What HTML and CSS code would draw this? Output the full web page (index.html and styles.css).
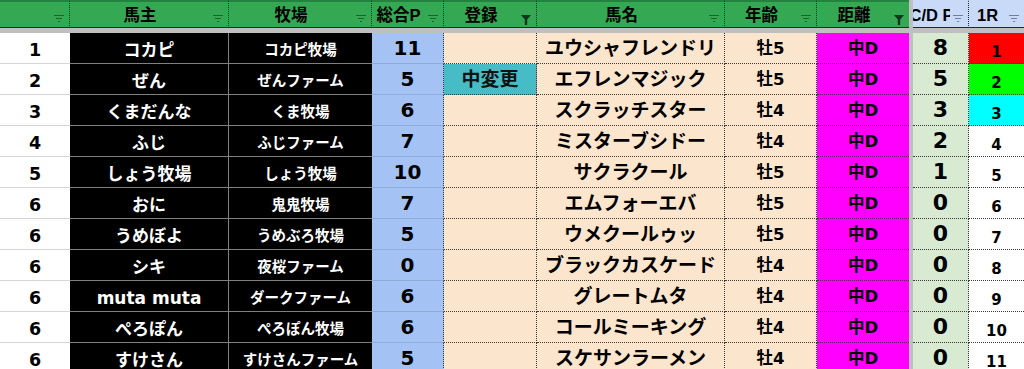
FILE: index.html
```html
<!DOCTYPE html>
<html lang="ja">
<head>
<meta charset="utf-8">
<title>Sheet</title>
<link rel="stylesheet" href="styles.css">
</head>
<body>
<div class="sheet">
  <div class="row head">
    <div class="h"><span class="lbl"></span><svg class="flt" width="10" height="8" viewBox="0 0 10 8"><path d="M0 .5h10M2 3.5h6M4 6.5h2" stroke="currentColor"/></svg></div>
    <div class="h"><span class="lbl">馬主</span><svg class="flt" width="10" height="8" viewBox="0 0 10 8"><path d="M0 .5h10M2 3.5h6M4 6.5h2" stroke="currentColor"/></svg></div>
    <div class="h"><span class="lbl">牧場</span><svg class="flt" width="10" height="8" viewBox="0 0 10 8"><path d="M0 .5h10M2 3.5h6M4 6.5h2" stroke="currentColor"/></svg></div>
    <div class="h"><span class="lbl">総合P</span><svg class="flt" width="10" height="8" viewBox="0 0 10 8"><path d="M0 .5h10M2 3.5h6M4 6.5h2" stroke="currentColor"/></svg></div>
    <div class="h"><span class="lbl">登録</span><svg class="flt on" width="10" height="10" viewBox="0 0 10 10"><path d="M0 0h10L6.2 4.6V10H3.8V4.6Z" fill="currentColor"/></svg></div>
    <div class="h"><span class="lbl">馬名</span><svg class="flt" width="10" height="8" viewBox="0 0 10 8"><path d="M0 .5h10M2 3.5h6M4 6.5h2" stroke="currentColor"/></svg></div>
    <div class="h"><span class="lbl">年齢</span><svg class="flt" width="10" height="8" viewBox="0 0 10 8"><path d="M0 .5h10M2 3.5h6M4 6.5h2" stroke="currentColor"/></svg></div>
    <div class="h last"><span class="lbl">距離</span><svg class="flt on" width="10" height="10" viewBox="0 0 10 10"><path d="M0 0h10L6.2 4.6V10H3.8V4.6Z" fill="currentColor"/></svg></div>
    <div class="fz"></div>
    <div class="h blue"><span class="lbl">C/D P</span><svg class="flt" width="10" height="8" viewBox="0 0 10 8"><path d="M0 .5h10M2 3.5h6M4 6.5h2" stroke="currentColor"/></svg></div>
    <div class="h blue last"><span class="lbl">1R</span><svg class="flt" width="10" height="8" viewBox="0 0 10 8"><path d="M0 .5h10M2 3.5h6M4 6.5h2" stroke="currentColor"/></svg></div>
  </div>
  <div class="band"></div>

  <div class="row"><div class="c a">1</div><div class="c b">コカピ</div><div class="c cc">コカピ牧場</div><div class="c d">11</div><div class="c e"></div><div class="c f">ユウシャフレンドリ</div><div class="c g">牡5</div><div class="c m">中D</div><div class="fz"></div><div class="c i">8</div><div class="c j red">1</div></div>
  <div class="row"><div class="c a">2</div><div class="c b">ぜん</div><div class="c cc">ぜんファーム</div><div class="c d">5</div><div class="c e chg">中変更</div><div class="c f">エフレンマジック</div><div class="c g">牡5</div><div class="c m">中D</div><div class="fz"></div><div class="c i">5</div><div class="c j lime">2</div></div>
  <div class="row"><div class="c a">3</div><div class="c b">くまだんな</div><div class="c cc">くま牧場</div><div class="c d">6</div><div class="c e"></div><div class="c f">スクラッチスター</div><div class="c g">牡4</div><div class="c m">中D</div><div class="fz"></div><div class="c i">3</div><div class="c j cyan">3</div></div>
  <div class="row"><div class="c a">4</div><div class="c b">ふじ</div><div class="c cc">ふじファーム</div><div class="c d">7</div><div class="c e"></div><div class="c f">ミスターブシドー</div><div class="c g">牡4</div><div class="c m">中D</div><div class="fz"></div><div class="c i">2</div><div class="c j">4</div></div>
  <div class="row"><div class="c a">5</div><div class="c b">しょう牧場</div><div class="c cc">しょう牧場</div><div class="c d">10</div><div class="c e"></div><div class="c f">サクラクール</div><div class="c g">牡5</div><div class="c m">中D</div><div class="fz"></div><div class="c i">1</div><div class="c j">5</div></div>
  <div class="row"><div class="c a">6</div><div class="c b">おに</div><div class="c cc">鬼鬼牧場</div><div class="c d">7</div><div class="c e"></div><div class="c f">エムフォーエバ</div><div class="c g">牡5</div><div class="c m">中D</div><div class="fz"></div><div class="c i">0</div><div class="c j">6</div></div>
  <div class="row"><div class="c a">6</div><div class="c b">うめぼよ</div><div class="c cc">うめぶろ牧場</div><div class="c d">5</div><div class="c e"></div><div class="c f boxed">ウメクールゥッ</div><div class="c g">牡5</div><div class="c m">中D</div><div class="fz"></div><div class="c i">0</div><div class="c j">7</div></div>
  <div class="row"><div class="c a">6</div><div class="c b">シキ</div><div class="c cc">夜桜ファーム</div><div class="c d">0</div><div class="c e"></div><div class="c f">ブラックカスケード</div><div class="c g">牡4</div><div class="c m">中D</div><div class="fz"></div><div class="c i">0</div><div class="c j">8</div></div>
  <div class="row"><div class="c a">6</div><div class="c b">muta muta</div><div class="c cc">ダークファーム</div><div class="c d">6</div><div class="c e"></div><div class="c f">グレートムタ</div><div class="c g">牡4</div><div class="c m">中D</div><div class="fz"></div><div class="c i">0</div><div class="c j">9</div></div>
  <div class="row"><div class="c a">6</div><div class="c b">ぺろぽん</div><div class="c cc">ぺろぽん牧場</div><div class="c d">6</div><div class="c e"></div><div class="c f boxed">コールミーキング</div><div class="c g">牡4</div><div class="c m">中D</div><div class="fz"></div><div class="c i">0</div><div class="c j">10</div></div>
  <div class="row"><div class="c a">6</div><div class="c b">すけさん</div><div class="c cc">すけさんファーム</div><div class="c d">5</div><div class="c e"></div><div class="c f">スケサンラーメン</div><div class="c g">牡4</div><div class="c m">中D</div><div class="fz"></div><div class="c i">0</div><div class="c j">11</div></div>
</div>
</body>
</html>
```

FILE: styles.css
```css
* { box-sizing: border-box; margin: 0; padding: 0; }
html, body { width: 1024px; height: 369px; overflow: hidden; background: #fff; }
body { font-family: "DejaVu Sans", "Noto Sans CJK JP", sans-serif; color: #000; }

.sheet { display: flex; flex-direction: column; }
.row {
  display: grid;
  grid-template-columns: 70px 159px 143px 72px 93px 188px 92px 92px 4px 56px 55px;
  height: 31px;
  flex: none;
}
.head { height: 28px; }
.band { height: 5px; background: #bfbfbf; flex: none; }
.fz { background: #bfbfbf; }

/* header */
.h {
  display: flex;
  align-items: center;
  background: #35a853;
  border-top: 2px solid #23823d;
  border-bottom: 1px solid #1f2a22;
  border-right: 1px dotted #17301d;
  overflow: hidden;
  font-family: "Liberation Sans", "Noto Sans CJK JP", sans-serif;
  font-weight: 700;
  font-size: 16.5px;
  line-height: 1;
}
.h.last { border-right: none; }
.h.blue { background: #c9daf8; border-top-color: #c9daf8; }
.h .lbl {
  flex: 1;
  min-width: 0;
  display: flex;
  justify-content: center;
  white-space: nowrap;
  overflow: hidden;
  padding-top: 1px;
}
.flt {
  flex: none;
  align-self: flex-start;
  margin: 13px 5px 0 3px;
  color: rgba(0, 0, 0, 0.42);
}
.flt.on { color: #12361b; }

/* body cells */
.c {
  display: flex;
  align-items: center;
  justify-content: center;
  white-space: nowrap;
  overflow: hidden;
  font-weight: 700;
  line-height: 1;
}
.a { background: #fff; font-size: 17.5px; border-bottom: 1px solid #d6d6d6; padding-top: 6px; }
.b { background: #000; color: #fff; font-size: 17px; border-right: 1px solid #808080; border-bottom: 1px solid #808080; padding-top: 4px; }
.cc { background: #000; color: #fff; font-size: 14.5px; border-bottom: 1px solid #808080; padding-top: 4px; }
.d { background: #a4c2f4; font-size: 20px; border-bottom: 1px solid #8fabd9; border-right: 1px dotted #3a3a3a; }
.e { background: #fce5cd; font-size: 19px; font-weight: 700; border-right: 1px dotted #3a3a3a; border-bottom: 1px dotted #3a3a3a; }
.e.chg { background: #46bdc6; color: #111; }
.f { background: #fce5cd; font-size: 19px; border-right: 1px dotted #3a3a3a; border-bottom: 1px dotted #3a3a3a; position: relative; }
.f.boxed::after {
  content: "";
  position: absolute;
  top: -1px; left: -1px; right: -1px; bottom: -1px;
  border: 1px solid #c4c4c4;
}
.g { background: #fce5cd; font-size: 16.5px; border-right: 1px dotted #3a3a3a; border-bottom: 1px dotted #3a3a3a; padding-top: 3px; }
.m { background: #ff00ff; font-size: 16.5px; border-bottom: 1px dotted #3a3a3a; padding-top: 3px; }
.i { background: #d9ead3; font-size: 22px; border-right: 1px dotted #3a3a3a; border-bottom: 1px dotted #3a3a3a; }
.j { background: #fff; font-size: 15px; border-bottom: 1px dotted #3a3a3a; padding-top: 8px; }
.j.red { background: #ff0000; }
.j.lime { background: #00ff00; }
.j.cyan { background: #00ffff; }
```
